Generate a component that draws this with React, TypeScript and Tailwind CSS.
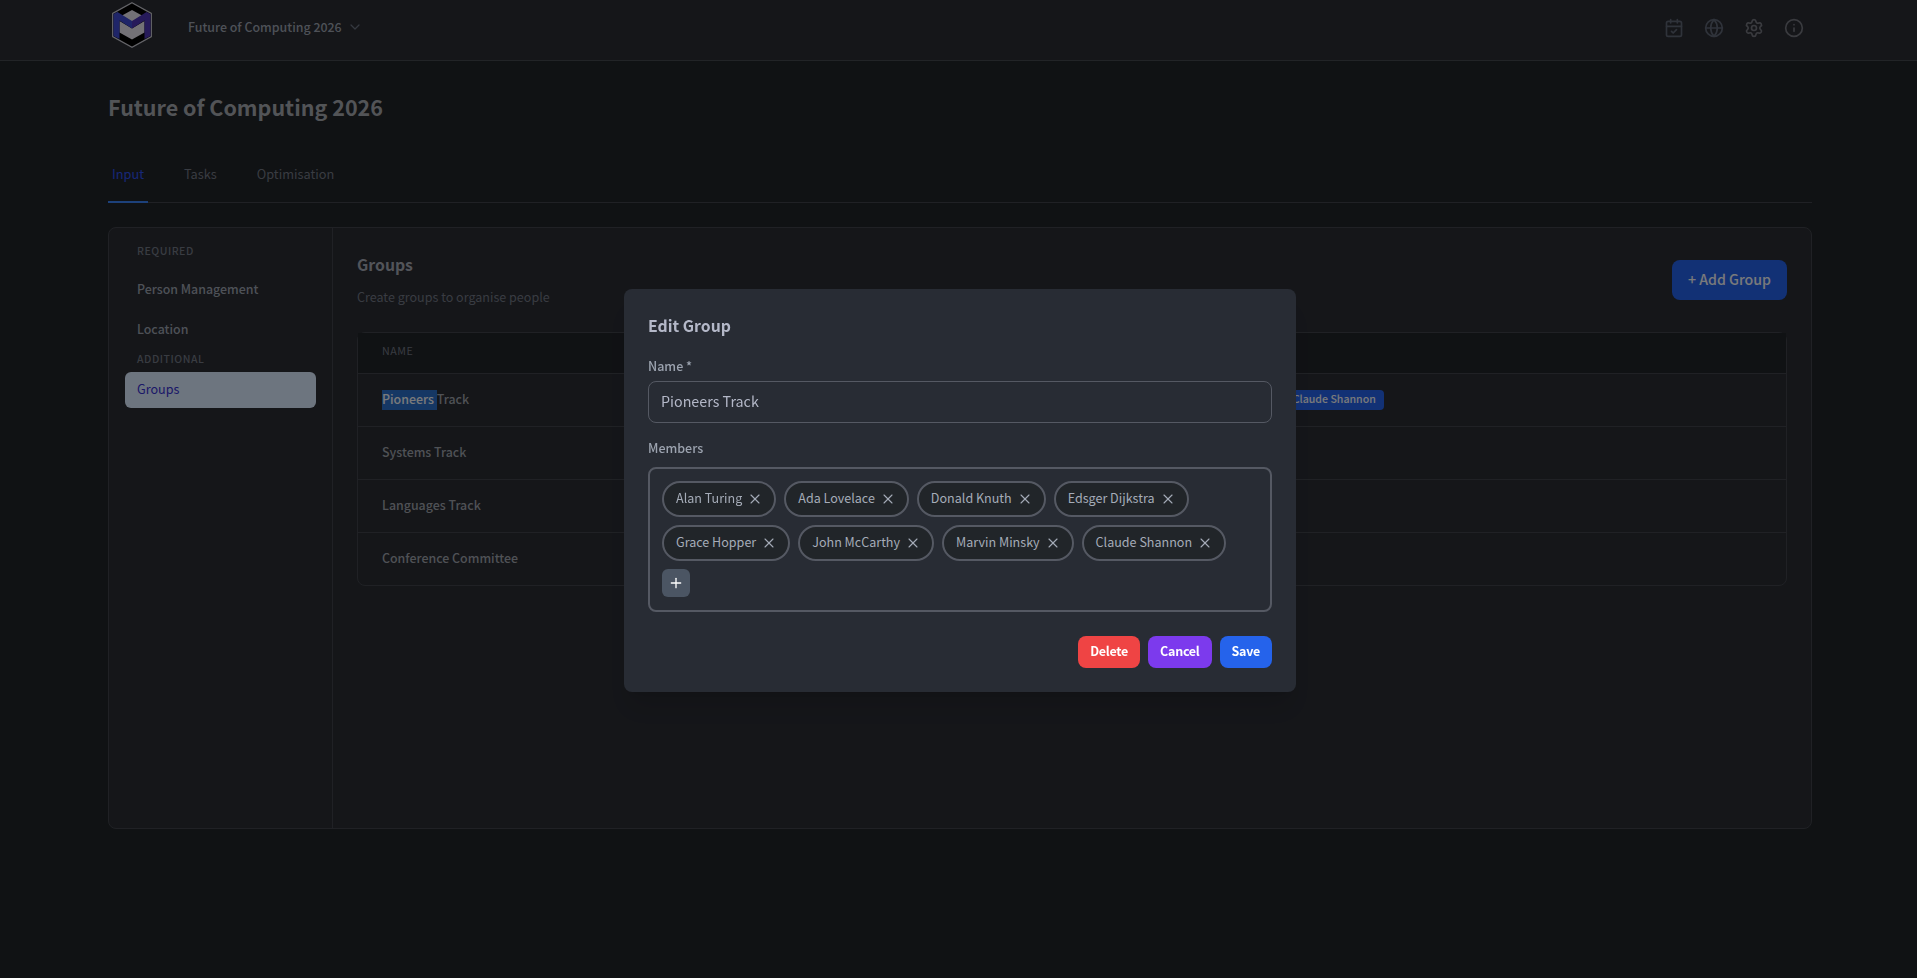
import { CalendarCheck, ChevronDown, Globe, Info, Plus, Settings, X } from 'lucide-react';

const tabs = ['Input', 'Tasks', 'Optimisation'];

const groups = [
  { id: 1, name: 'Pioneers Track', members: ['Alan Turing', 'Ada Lovelace', 'Donald Knuth', 'Edsger Dijkstra', 'Grace Hopper', 'John McCarthy', 'Marvin Minsky', 'Claude Shannon'] },
  { id: 2, name: 'Systems Track', members: [] },
  { id: 3, name: 'Languages Track', members: [] },
  { id: 4, name: 'Conference Committee', members: [] },
];

function Logo() {
  return (
    <svg viewBox="0 0 40 46" className="h-[46px] w-10">
      <path d="M20 .8 39.3 11.5v23L20 45.2.7 34.5v-23z" fill="#000" stroke="#c8c8d0" strokeWidth="1.3" />
      <path d="M20 8 30 13.500 20 20 10 13.500z" fill="#e6e2ec" />
      <path d="M7.500 19 20 26.500 32.500 19V30.500L20 37.500 7.500 30.500z" fill="#e6e2ec" />
      <path d="M1.500 12 5.500 10 20 19v7.500L7.500 18.500V37L1.500 34z" fill="#3f4bd0" />
      <path d="M38.500 12 34.500 10 20 19v7.500l12.500-8V37l6-3z" fill="#4c34b4" />
    </svg>
  );
}

function Header() {
  return (
    <header className="h-[61px] border-b border-[#45484f] bg-[#2a2c33]">
      <div className="mx-auto flex h-[60px] w-[1704px] items-center justify-between pl-1 pr-2">
        <div className="flex items-center">
          <div className="pb-[10px]">
            <Logo />
          </div>
          <button className="ml-9 flex items-center gap-[5px] pb-[5px] text-[12.4px] font-medium text-[#9ca3af]">
            Future of Computing 2026
            <ChevronDown className="size-4" strokeWidth={1.8} color="#6b7280" />
          </button>
        </div>
        <div className="flex items-center gap-5 pb-1">
          <CalendarCheck size={20} className="text-[#5f6675]" />
          <Globe size={20} className="text-[#5f6675]" />
          <Settings size={20} className="text-[#74767e]" />
          <Info size={20} className="text-[#74767e]" />
        </div>
      </div>
    </header>
  );
}

function Sidebar() {
  return (
    <aside className="w-56 flex-shrink-0 border-r border-[#40434a] p-4">
      <h3 className="px-3 pb-0.5 text-[10.5px] leading-[14px] font-medium tracking-wider text-[#727884]">REQUIRED</h3>
      <div className="mt-3 flex h-9 items-center px-3 pb-0.5 text-[12.4px] font-medium text-[#9ca3af]">Person Management</div>
      <div className="mt-1 flex h-9 items-center px-3 pb-0.5 text-[12.4px] font-medium text-[#9ca3af]">Location</div>
      <h3 className="mt-[3px] px-3 text-[10.5px] leading-4 font-medium tracking-wider text-[#727884]">ADDITIONAL</h3>
      <div className="mt-[5px] flex h-9 items-center rounded-md bg-[#dbeafe] px-3 pb-0.5 text-[12.6px] text-[#3730d0]">Groups</div>
    </aside>
  );
}

function GroupsTable() {
  return (
    <div className="mt-6 rounded-lg border border-[#40434a]">
      <div className="flex h-10 items-center bg-[#212429] px-6 pb-[3px] text-[10.7px] tracking-wider text-[#727884]">NAME</div>
      {groups.map((group) => (
        <div key={group.id} className="flex h-[53px] items-center border-t border-[#40434a] px-6 text-[12.4px] font-medium text-[#9fa3ab]">
          <div className="flex h-5 w-[276px] leading-[18px]">
            {group.id === 1 ? (
              <>
                <span className="whitespace-pre bg-[#2a6fc9] text-[#f3f4f6]">Pioneers </span>Track
              </>
            ) : (
              group.name
            )}
          </div>
          <div className="flex gap-1">
            {group.members.map((member) => (
              <span key={member} className="h-5 rounded bg-[#2563eb] px-2 text-[10.6px] leading-[18px] text-[#f3f4f6]">{member}</span>
            ))}
          </div>
        </div>
      ))}
    </div>
  );
}

function EditGroupModal() {
  return (
    <div className="w-[672px] rounded-lg bg-[#282c34] p-6 shadow-xl">
      <h3 className="pb-0.5 text-[15.8px] leading-[26px] font-semibold text-[#b4b8c8]">Edit Group</h3>
      <label className="mt-4 block pb-0.5 text-[12.5px] leading-[18px] font-medium text-[#9ca3af]">Name *</label>
      <input
        readOnly
        value="Pioneers Track"
        className="mt-1 block h-[42px] w-full rounded-lg border border-[#555963] px-3 pb-[3px] text-[14.3px] text-[#b4b8c8]"
      />
      <label className="mt-4 block pb-0.5 text-[12.5px] leading-[18px] font-medium text-[#9ca3af]">Members</label>
      <div className="mt-2 flex h-[145px] flex-wrap content-start gap-2 rounded-lg border-2 border-[#555963] p-3">
        {groups[0].members.map((member) => (
          <span
            key={member}
            className="flex h-9 items-center gap-[5px] rounded-full border-2 border-[#555963] bg-[#212529] pl-3 pr-[11px] text-[12.55px] text-[#a5acb8]"
          >
            <span className="pb-0.5">{member}</span>
            <X size={16} strokeWidth={1.6} />
          </span>
        ))}
        <button className="flex size-7 items-center justify-center rounded-md bg-[#4b5563] text-white">
          <Plus size={16} />
        </button>
      </div>
      <div className="mt-6 flex justify-end gap-2 text-[12.5px] font-bold tracking-[-0.27px] text-white">
        <button className="h-8 rounded-lg bg-[#ef4444] px-3 pb-0.5">Delete</button>
        <button className="h-8 rounded-lg bg-[#7c3aed] px-3 pb-0.5">Cancel</button>
        <button className="h-8 rounded-lg bg-[#2563eb] px-3 pb-0.5">Save</button>
      </div>
    </div>
  );
}

export default function App() {
  const activeTab = 'Input';

  return (
    <div className="h-screen overflow-hidden bg-[#212429] font-['Noto_Sans_CJK_SC',sans-serif]">
      <div className="w-[1920px]">
        <Header />
        <main className="mx-auto w-[1704px] pt-[30px]">
          <h1 className="text-[21.5px] leading-8 font-bold text-[#a5a8ae]">Future of Computing 2026</h1>
          <nav className="mt-[41px] flex gap-8 border-b border-[#40434a] text-[12.75px] leading-5">
            {tabs.map((tab) => (
              <div
                key={tab}
                className={`-mb-px border-b-2 px-1 pb-[17px] ${
                  tab === activeTab ? 'border-[#3b82f6] text-[#2d50ee]' : 'border-transparent text-[#727884]'
                }`}
              >
                {tab}
              </div>
            ))}
          </nav>
          <div className="mt-6 flex h-[602px] rounded-lg border border-[#40434a] bg-[#2a2c33]">
            <Sidebar />
            <section className="flex-1 p-6">
              <div className="flex items-center justify-between">
                <div>
                  <h2 className="pb-0.5 text-[15.8px] leading-[26px] font-semibold text-[#a5a8b2]">Groups</h2>
                  <p className="mt-2 pb-0.5 text-[12.55px] leading-[18px] text-[#727884]">Create groups to organise people</p>
                </div>
                <button className="h-10 rounded-lg bg-[#2563eb] px-4 pb-px text-[14.15px] font-medium text-[#f3f4f6]">+ Add Group</button>
              </div>
              <GroupsTable />
            </section>
          </div>
        </main>
      </div>
      <div className="fixed inset-y-0 left-0 flex w-[1920px] items-center justify-center bg-black/50 pt-[3px]">
        <EditGroupModal />
      </div>
    </div>
  );
}
